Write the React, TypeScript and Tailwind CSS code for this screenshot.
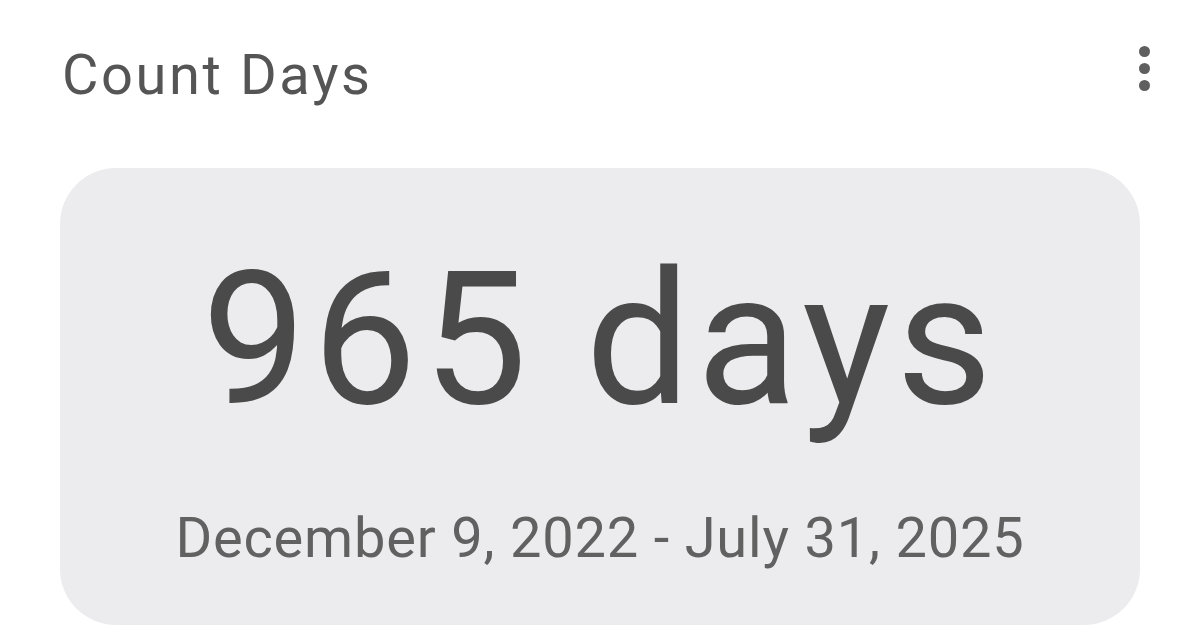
export default function App() {
  return (
    <div className="w-[1200px] h-[639px] bg-white overflow-hidden font-['Roboto',sans-serif]">
      {/* Header */}
      <div className="flex justify-between items-start pl-[62px] pr-[50px] pt-[40px] h-[130px]">
        <div className="text-[56px] leading-[70px] tracking-[2.6px] text-[#555555]">Count Days</div>
        <div className="flex flex-col gap-[6px] pt-[6px]">
          <span className="block w-[11px] h-[11px] rounded-full bg-[#5f5f5f]" />
          <span className="block w-[11px] h-[11px] rounded-full bg-[#5f5f5f]" />
          <span className="block w-[11px] h-[11px] rounded-full bg-[#5f5f5f]" />
        </div>
      </div>

      {/* Card */}
      <div className="mx-[60px] mt-[38px] h-[457px] rounded-[56px] bg-[#ececee] flex flex-col items-center">
        <div className="text-[186px] leading-none tracking-[6px] text-[#4a4a4a] mt-[78px]">965 days</div>
        <div className="text-[56px] leading-none tracking-[0.8px] text-[#616161] mt-[78px]">
          December 9, 2022 - July 31, 2025
        </div>
      </div>
    </div>
  );
}
